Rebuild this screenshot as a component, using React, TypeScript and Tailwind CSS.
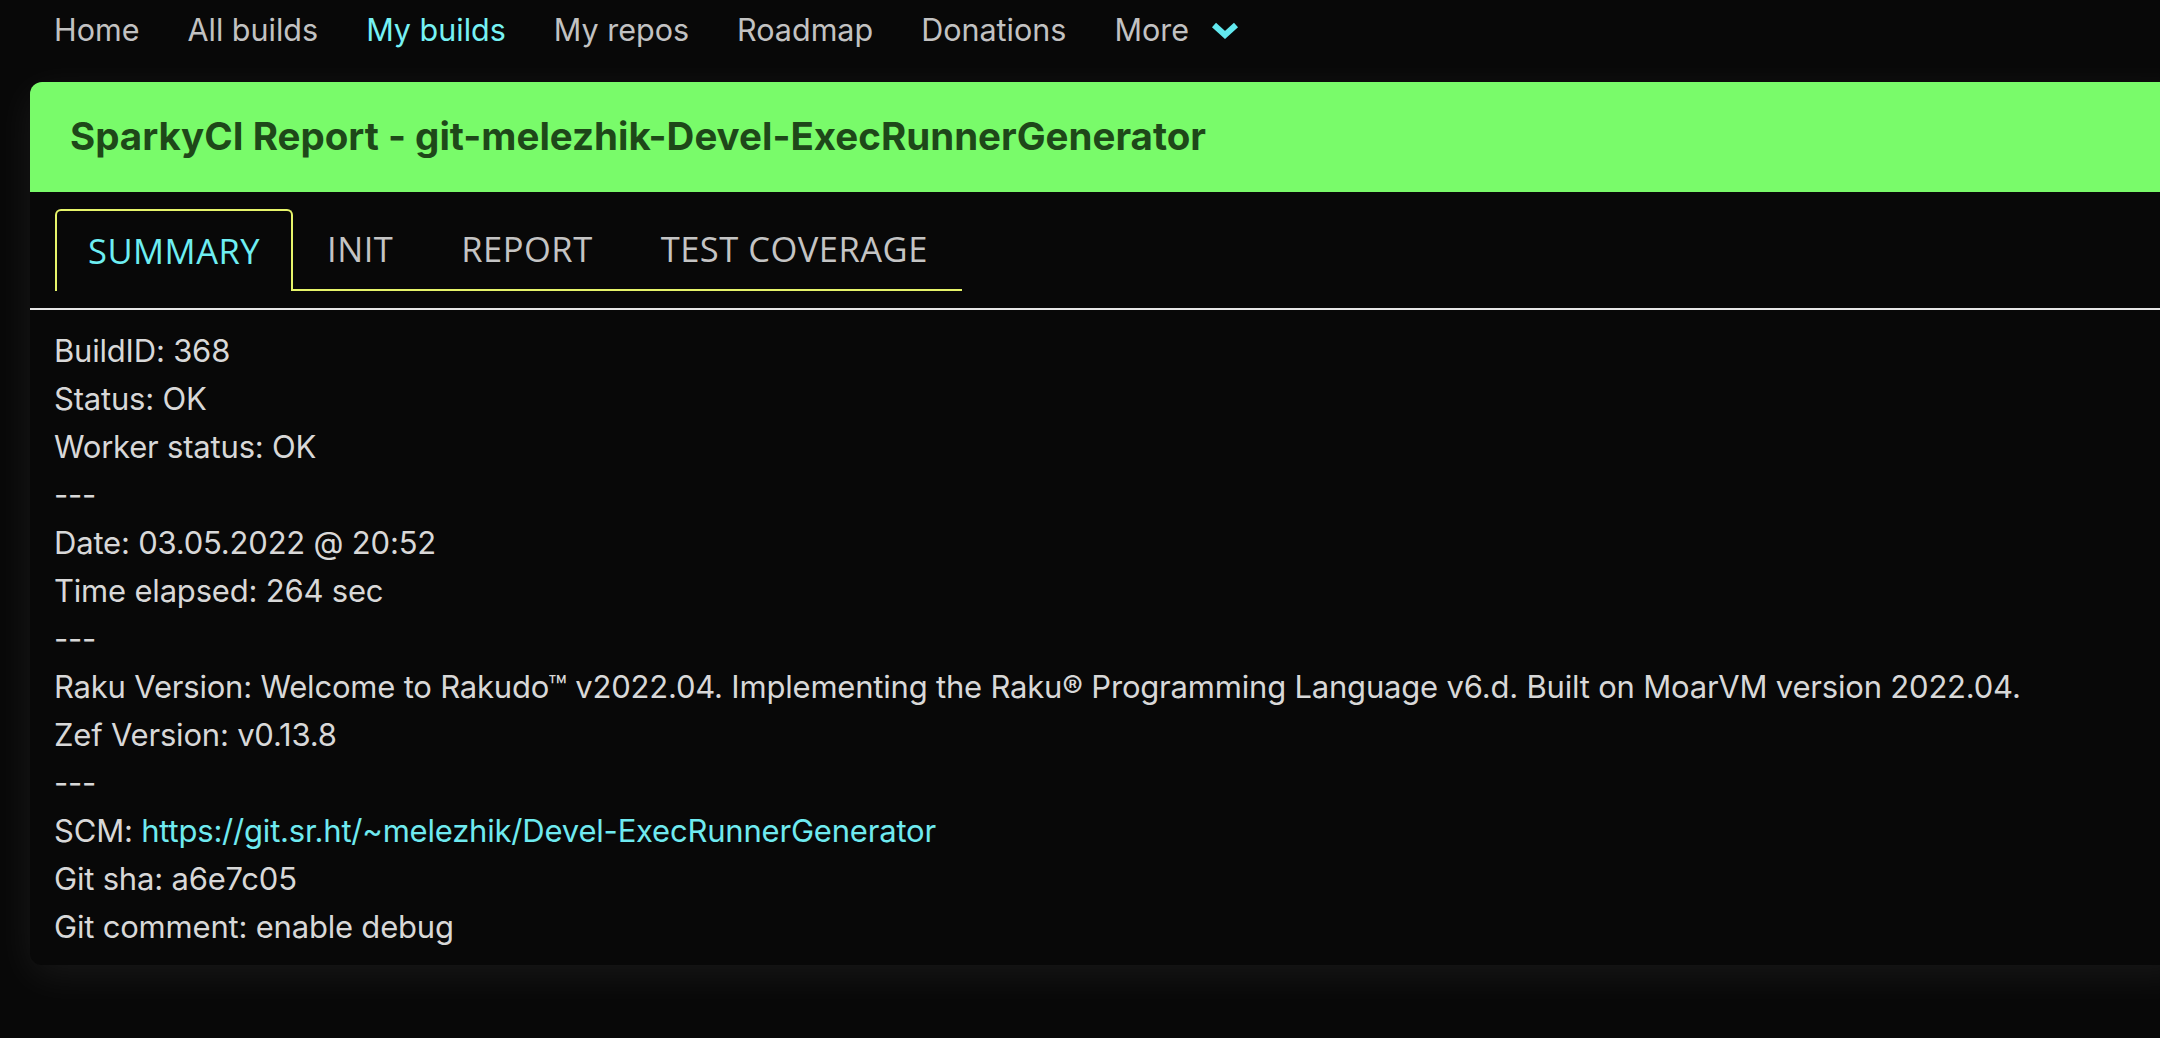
import React from 'react';

const navItems = ['Home', 'All builds', 'My builds', 'My repos', 'Roadmap', 'Donations'];
const tabs = ['SUMMARY', 'INIT', 'REPORT', 'TEST COVERAGE'];

function Line({ children }: { children: React.ReactNode }) {
  return <div className="leading-[48px] whitespace-nowrap">{children}</div>;
}

export default function App() {
  return (
    <div className="min-h-screen w-full overflow-hidden bg-[#080808] font-['Inter','Liberation_Sans',sans-serif]">
      {/* top navigation */}
      <nav className="flex items-center gap-[48px] pl-[54px] pt-[8px] h-[52px] text-[30.5px] text-[#c2c2c2]">
        {navItems.map((item) => (
          <a key={item} className={item === 'My builds' ? 'text-[#76f2f4]' : ''}>
            {item}
          </a>
        ))}
        <a className="flex items-center gap-[21px]">
          More
          <svg width="30" height="20" viewBox="0 0 30 20" className="text-[#62e8ee]">
            <polyline points="4,5 15,15 26,5" fill="none" stroke="currentColor" strokeWidth="6" strokeLinejoin="miter" />
          </svg>
        </a>
      </nav>

      {/* report card */}
      <div className="ml-[30px] mt-[30px] w-[2160px] rounded-[12px] bg-[#080808] shadow-[0_10px_40px_rgba(255,255,255,0.07)]">
        <div className="flex h-[110px] items-center rounded-t-[12px] bg-[#79fb6a] pl-[40px]">
          <h1 className="text-[38.5px] font-bold text-[#1e4819]">
            SparkyCI Report - git-melezhik-Devel-ExecRunnerGenerator
          </h1>
        </div>

        <div className="px-[25px] py-[17px]">
          <ul className="flex font-['Open_Sans',sans-serif] text-[34.5px] tracking-[0.5px]">
            {tabs.map((tab, i) => (
              <li
                key={tab}
                className={
                  i === 0
                    ? 'flex h-[82px] items-center rounded-t-[6px] border-2 border-b-0 border-[#e6f46a] px-[31px] text-[#6eeef2]'
                    : 'flex h-[82px] items-center border-b-2 border-[#e6f46a] px-[34px] text-[#c4c4c4]'
                }
              >
                {tab}
              </li>
            ))}
          </ul>
        </div>
        <div className="h-[2px] bg-[#e6e6e6]" />

        <div className="pl-[24px] pt-[17px] pb-[14px] text-[31px] tracking-[-0.2px] text-[#d8d8d8]">
          <Line>BuildID: 368</Line>
          <Line>Status: OK</Line>
          <Line>Worker status: OK</Line>
          <Line>---</Line>
          <Line>Date: 03.05.2022 @ 20:52</Line>
          <Line>Time elapsed: 264 sec</Line>
          <Line>---</Line>
          <Line>
            Raku Version: Welcome to Rakudo™ v2022.04. Implementing the Raku® Programming Language v6.d. Built on
            MoarVM version 2022.04.
          </Line>
          <Line>Zef Version: v0.13.8</Line>
          <Line>---</Line>
          <Line>
            SCM: <a className="text-[#6feaf0]">https://git.sr.ht/~melezhik/Devel-ExecRunnerGenerator</a>
          </Line>
          <Line>Git sha: a6e7c05</Line>
          <Line>Git comment: enable debug</Line>
        </div>
      </div>
    </div>
  );
}
